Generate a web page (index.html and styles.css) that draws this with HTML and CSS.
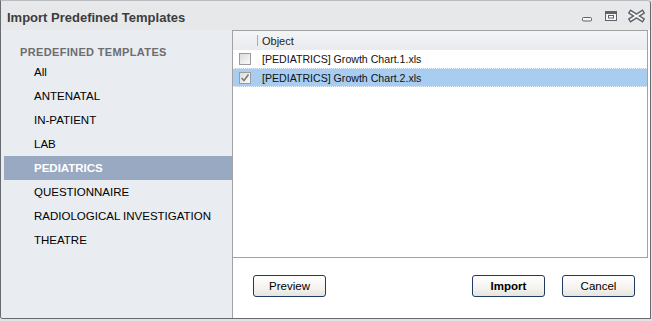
FILE: index.html
```html
<html>
<head>
    <meta charset="UTF-8">
    <title>Import Predefined Templates</title>
    <link rel="stylesheet" href="styles.css">
</head>
<body>
    <div class="window">
        <div class="titlebar">
            <div class="title">Import Predefined Templates</div>
            <svg class="wbtns" width="68" height="29" viewBox="0 0 68 29">
                <rect x="0.5" y="16.5" width="9" height="3.5" rx="1" fill="#f6f6f6" stroke="#5f636a"/>
                <rect x="23.5" y="10.5" width="11" height="9" fill="#f6f6f6" stroke="#5f636a"/>
                <rect x="24" y="11" width="10" height="2" fill="#5f636a"/>
                <rect x="26.5" y="14.5" width="5" height="2.5" fill="#fff" stroke="#5f636a"/>
                <path d="M49 11.5 L60 18.5 M60 11.5 L49 18.5" stroke="#5f636a" stroke-width="4.6" stroke-linecap="square" fill="none"/>
                <path d="M49 11.5 L60 18.5 M60 11.5 L49 18.5" stroke="#f6f6f6" stroke-width="1.8" stroke-linecap="square" fill="none"/>
            </svg>
        </div>
        <div class="main">
            <div class="sidebar">
                <div class="side-head">PREDEFINED TEMPLATES</div>
                <div class="side-item">All</div>
                <div class="side-item">ANTENATAL</div>
                <div class="side-item">IN-PATIENT</div>
                <div class="side-item">LAB</div>
                <div class="side-item selected">PEDIATRICS</div>
                <div class="side-item">QUESTIONNAIRE</div>
                <div class="side-item">RADIOLOGICAL INVESTIGATION</div>
                <div class="side-item">THEATRE</div>
            </div>
            <div class="content">
                <div class="grid">
                    <div class="grid-head">
                        <div class="col-check"><span class="sep"></span></div>
                        <div class="col-name">Object</div>
                    </div>
                    <div class="grid-row">
                        <div class="col-check"><span class="check"></span></div>
                        <div class="col-name">[PEDIATRICS] Growth Chart.1.xls</div>
                    </div>
                    <div class="grid-row active">
                        <div class="col-check">
                            <span class="check">
                                <svg width="10" height="10" viewBox="0 0 10 10"><path d="M1.5 5 L4 7.5 L8.5 1.5" stroke="#7b7b7b" stroke-width="1.6" fill="none"/></svg>
                            </span>
                        </div>
                        <div class="col-name">[PEDIATRICS] Growth Chart.2.xls</div>
                    </div>
                </div>
                <div class="footer">
                    <button class="btn">Preview</button>
                    <span class="spacer"></span>
                    <button class="btn bold">Import</button>
                    <button class="btn">Cancel</button>
                </div>
            </div>
        </div>
    </div>
</body>
</html>
```

FILE: styles.css
```css
body {
    margin: 0;
    background: #e2e3e5;
    font-family: "Liberation Sans", Arial, sans-serif;
}
.window {
    width: 651px;
    height: 319px;
    box-sizing: border-box;
    border: 1px solid #676b71;
    border-top-color: #b9bcc0;
    border-radius: 0 4px 0 3px;
    background: #e7e9ec;
    display: flex;
    flex-direction: column;
    overflow: hidden;
}
.titlebar {
    height: 29px;
    display: flex;
    align-items: center;
    background: #e7e8ea;
}
.title {
    flex: 1;
    padding: 3px 0 0 6px;
    font-size: 13px;
    font-weight: bold;
    color: #3b3d40;
}
.wbtns {
    display: block;
}
.main {
    flex: 1;
    display: flex;
}
.sidebar {
    width: 231px;
    box-sizing: border-box;
    padding: 14px 0 0 3px;
    background: #e9ecf0;
}
.side-head {
    height: 16px;
    line-height: 16px;
    padding-left: 16px;
    font-size: 11px;
    font-weight: bold;
    letter-spacing: 0.35px;
    color: #6c6d70;
}
.side-item {
    height: 24px;
    line-height: 24px;
    padding-left: 30px;
    font-size: 11.5px;
    color: #000;
}
.side-item.selected {
    background: #9aa9c2;
    color: #fff;
    font-weight: bold;
}
.content {
    flex: 1;
    background: #fff;
    border-left: 1px solid #a2a2a2;
    padding-right: 2px;
    display: flex;
    flex-direction: column;
}
.grid {
    height: 228px;
    box-sizing: border-box;
    border: 1px solid #a2a2a2;
    border-left: none;
}
.grid-head {
    height: 19px;
    display: flex;
    align-items: center;
    background: linear-gradient(#f3f4f6, #e9ebee);
    font-size: 11px;
    color: #222;
}
.grid-row {
    height: 18px;
    display: flex;
    align-items: center;
    font-size: 10.6px;
    color: #111;
}
.grid-row.active {
    background: #a8cdf0;
    border-top: 1px dotted #e6f0fa;
    border-bottom: 1px dotted #e6f0fa;
    height: 17px;
}
.col-check {
    width: 25px;
    height: 100%;
    display: flex;
    align-items: center;
    justify-content: flex-end;
}
.col-name {
    padding-left: 4px;
}
.sep {
    width: 1px;
    height: 11px;
    background: #a9abae;
}
.grid-row .col-check {
    justify-content: flex-start;
    padding-left: 6px;
    box-sizing: border-box;
}
.check {
    width: 12px;
    height: 12px;
    box-sizing: border-box;
    border: 1px solid #9b9b9b;
    background: linear-gradient(135deg, #dcdcdc, #fafafa);
    display: flex;
    align-items: center;
    justify-content: center;
}
.check svg {
    display: block;
}
.footer {
    flex: 1;
    display: flex;
    align-items: flex-start;
    padding: 17px 13px 0 20px;
}
.spacer {
    flex: 1;
}
.btn {
    width: 73px;
    height: 22px;
    margin-left: 17px;
    border: 1px solid #1f3b63;
    border-radius: 3px;
    background: linear-gradient(#ffffff, #f4f3ef 60%, #e6e4dc);
    font-family: "Liberation Sans", Arial, sans-serif;
    font-size: 11.5px;
    color: #000;
    padding: 0;
}
.btn:first-child {
    margin-left: 0;
}
.btn.bold {
    font-weight: bold;
}
```
